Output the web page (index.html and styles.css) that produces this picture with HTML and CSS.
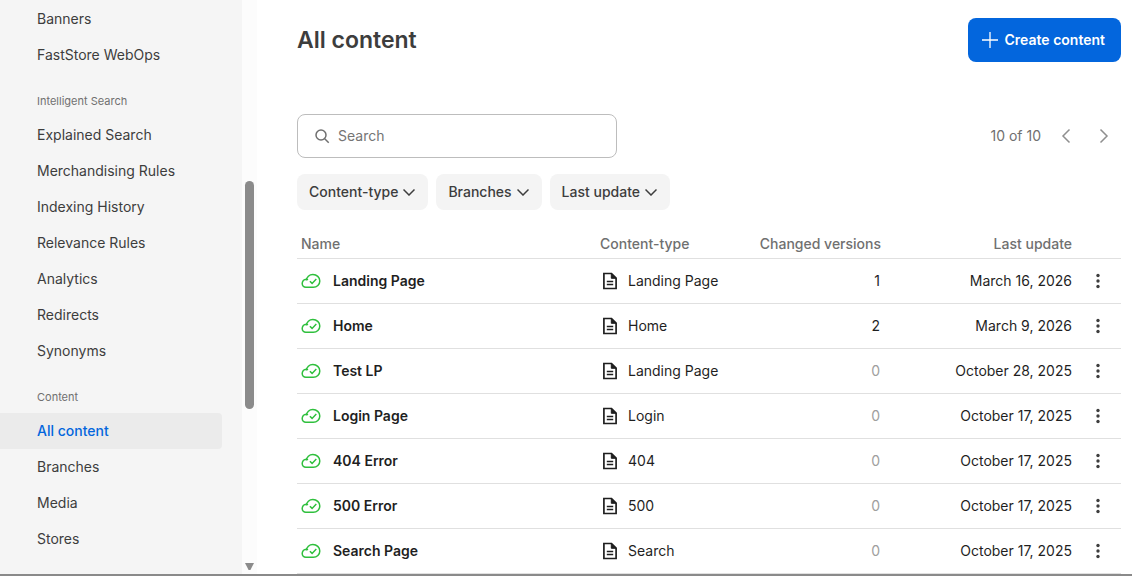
FILE: index.html
```html
<!DOCTYPE html>
<html lang="en">
<head>
  <meta charset="UTF-8" />
  <meta name="viewport" content="width=device-width, initial-scale=1.0" />
  <title>All content</title>
  <link rel="stylesheet" href="styles.css">
</head>
<body>

  <!-- Shared icons -->
  <svg class="sprite" aria-hidden="true">
    <symbol id="icon-cloud" viewBox="0 0 20 16">
      <path d="M5.500 7.500C5.500 4 8.300 1.500 11.900 1.500c3.800 0 6.900 2.800 6.900 6.400s-2.900 6.400-6.500 6.400H4.900C2.700 14.300 1.200 12.800 1.200 10.600s1.700-4.400 3.900-4.400c.8 0 1.400.2 2 .5" />
      <path d="M8.900 8.200l2.200 2.200 4.200-4.300" />
    </symbol>
    <symbol id="icon-doc" viewBox="0 0 16 18">
      <path d="M1.900 1.500h7.600l4.600 4.600v10.400H1.900z" />
      <path d="M9.300 1.700v4.600h4.600z" fill="currentColor" stroke-width="1" />
      <path d="M4.800 9.500h6.400M4.800 12.500h6.400" stroke-width="1.500" />
    </symbol>
    <symbol id="icon-dots" viewBox="0 0 16 16">
      <circle cx="8" cy="2.500" r="1.700" />
      <circle cx="8" cy="8" r="1.700" />
      <circle cx="8" cy="13.500" r="1.700" />
    </symbol>
    <symbol id="icon-down" viewBox="0 0 12 8">
      <path d="M.500 1.500L6 7l5.500-5.500" />
    </symbol>
  </svg>

  <div class="layout">
    <aside class="sidebar">
      <nav class="menu">
        <a href="#">Banners</a>
        <a href="#">FastStore WebOps</a>
        <h2>Intelligent Search</h2>
        <a href="#">Explained Search</a>
        <a href="#">Merchandising Rules</a>
        <a href="#">Indexing History</a>
        <a href="#">Relevance Rules</a>
        <a href="#">Analytics</a>
        <a href="#">Redirects</a>
        <a href="#">Synonyms</a>
        <h2>Content</h2>
        <a href="#" class="active">All content</a>
        <a href="#">Branches</a>
        <a href="#">Media</a>
        <a href="#">Stores</a>
      </nav>
      <div class="scrollbar">
        <div class="thumb"></div>
        <div class="arrow"></div>
      </div>
    </aside>

    <main class="content">
      <header class="page-header">
        <h1>All content</h1>
        <button type="button" class="create-btn">
          <svg width="16" height="16" viewBox="0 0 16 16"><path d="M8 0v16M0 8h16" /></svg>
          Create content
        </button>
      </header>

      <div class="toolbar">
        <label class="search">
          <svg width="16" height="16" viewBox="0 0 16 16"><circle cx="7" cy="7" r="5" /><path d="M10.700 10.700l4 4" /></svg>
          <input type="text" placeholder="Search" aria-label="Search" />
        </label>
        <div class="pagination">
          <span>10 of 10</span>
          <button type="button" aria-label="Previous page">
            <svg width="10" height="16" viewBox="0 0 10 16"><path d="M8.500 1.500L2 8l6.500 6.500" /></svg>
          </button>
          <button type="button" aria-label="Next page">
            <svg width="10" height="16" viewBox="0 0 10 16"><path d="M1.500 1.500L8 8l-6.500 6.500" /></svg>
          </button>
        </div>
      </div>

      <div class="filters">
        <button type="button">Content-type <svg><use href="#icon-down" /></svg></button>
        <button type="button">Branches <svg><use href="#icon-down" /></svg></button>
        <button type="button">Last update <svg><use href="#icon-down" /></svg></button>
      </div>

      <table>
        <thead>
          <tr>
            <th class="name">Name</th>
            <th class="type">Content-type</th>
            <th class="versions">Changed versions</th>
            <th class="date">Last update</th>
            <th class="actions"></th>
          </tr>
        </thead>
        <tbody>
          <tr>
            <td class="name"><div><svg class="cloud"><use href="#icon-cloud" /></svg>Landing Page</div></td>
            <td class="type"><div><svg class="doc"><use href="#icon-doc" /></svg>Landing Page</div></td>
            <td class="versions">1</td>
            <td class="date">March 16, 2026</td>
            <td class="actions"><button type="button" aria-label="Actions"><svg><use href="#icon-dots" /></svg></button></td>
          </tr>
          <tr>
            <td class="name"><div><svg class="cloud"><use href="#icon-cloud" /></svg>Home</div></td>
            <td class="type"><div><svg class="doc"><use href="#icon-doc" /></svg>Home</div></td>
            <td class="versions">2</td>
            <td class="date">March 9, 2026</td>
            <td class="actions"><button type="button" aria-label="Actions"><svg><use href="#icon-dots" /></svg></button></td>
          </tr>
          <tr>
            <td class="name"><div><svg class="cloud"><use href="#icon-cloud" /></svg>Test LP</div></td>
            <td class="type"><div><svg class="doc"><use href="#icon-doc" /></svg>Landing Page</div></td>
            <td class="versions none">0</td>
            <td class="date">October 28, 2025</td>
            <td class="actions"><button type="button" aria-label="Actions"><svg><use href="#icon-dots" /></svg></button></td>
          </tr>
          <tr>
            <td class="name"><div><svg class="cloud"><use href="#icon-cloud" /></svg>Login Page</div></td>
            <td class="type"><div><svg class="doc"><use href="#icon-doc" /></svg>Login</div></td>
            <td class="versions none">0</td>
            <td class="date">October 17, 2025</td>
            <td class="actions"><button type="button" aria-label="Actions"><svg><use href="#icon-dots" /></svg></button></td>
          </tr>
          <tr>
            <td class="name"><div><svg class="cloud"><use href="#icon-cloud" /></svg>404 Error</div></td>
            <td class="type"><div><svg class="doc"><use href="#icon-doc" /></svg>404</div></td>
            <td class="versions none">0</td>
            <td class="date">October 17, 2025</td>
            <td class="actions"><button type="button" aria-label="Actions"><svg><use href="#icon-dots" /></svg></button></td>
          </tr>
          <tr>
            <td class="name"><div><svg class="cloud"><use href="#icon-cloud" /></svg>500 Error</div></td>
            <td class="type"><div><svg class="doc"><use href="#icon-doc" /></svg>500</div></td>
            <td class="versions none">0</td>
            <td class="date">October 17, 2025</td>
            <td class="actions"><button type="button" aria-label="Actions"><svg><use href="#icon-dots" /></svg></button></td>
          </tr>
          <tr>
            <td class="name"><div><svg class="cloud"><use href="#icon-cloud" /></svg>Search Page</div></td>
            <td class="type"><div><svg class="doc"><use href="#icon-doc" /></svg>Search</div></td>
            <td class="versions none">0</td>
            <td class="date">October 17, 2025</td>
            <td class="actions"><button type="button" aria-label="Actions"><svg><use href="#icon-dots" /></svg></button></td>
          </tr>
        </tbody>
      </table>
    </main>
  </div>

</body>
</html>
```
FILE: styles.css
```css
* {
  margin: 0;
  padding: 0;
  box-sizing: border-box;
}

body {
  height: 100vh;
  overflow: hidden;
  display: flex;
  flex-direction: column;
  border-bottom: 2px solid #8a8a8a;
  background: #fff;
  color: #1f1f1f;
  font-family: Inter, "Liberation Sans", sans-serif;
  font-size: 14px;
  line-height: 20px;
}

button,
input {
  font: inherit;
  color: inherit;
  border: none;
  background: none;
}

button {
  cursor: pointer;
}

svg {
  fill: none;
  stroke: currentColor;
  flex-shrink: 0;
}

.sprite {
  display: none;
}

.layout {
  display: flex;
  flex: 1;
  min-height: 0;
}

/* Sidebar */
.sidebar {
  display: flex;
  flex-shrink: 0;
  background: #f5f5f5;
}

.menu {
  width: 242px;
  padding: 1px 20px 0 0;
  overflow: hidden;
}

.menu a {
  display: block;
  padding: 8px 0 8px 37px;
  border-radius: 0 4px 4px 0;
  color: #3d3d3d;
  text-decoration: none;
}

.menu a.active {
  background: #ebebeb;
  color: #0366dd;
  font-weight: 500;
}

.menu h2 {
  padding: 20px 0 8px 37px;
  font-size: 11px;
  font-weight: 400;
  line-height: 16px;
  color: #707070;
}

.scrollbar {
  display: flex;
  flex-direction: column;
  justify-content: space-between;
  align-items: center;
  width: 15px;
  padding: 181px 0 4px;
  background: #fcfcfc;
}

.thumb {
  width: 9px;
  height: 228px;
  border-radius: 5px;
  background: #8b8b8b;
}

.arrow {
  width: 9px;
  height: 7px;
  background: #8b8b8b;
  clip-path: polygon(0 0, 100% 0, 60% 100%, 40% 100%);
}

/* Main area */
.content {
  flex: 1;
  min-width: 0;
  padding: 18px 11px 0 40px;
  overflow: hidden;
}

.page-header {
  display: flex;
  justify-content: space-between;
  align-items: center;
  height: 44px;
  margin-bottom: 52px;
}

h1 {
  font-size: 23px;
  font-weight: 600;
  line-height: 32px;
  color: #3d3d3d;
}

.create-btn {
  display: flex;
  align-items: center;
  gap: 7px;
  height: 44px;
  padding: 0 16px 0 14px;
  border-radius: 8px;
  background: #0366dd;
  color: #fff;
  font-weight: 600;
}

.create-btn svg {
  stroke-width: 1.3;
}

.toolbar {
  display: flex;
  justify-content: space-between;
  align-items: center;
  margin-bottom: 16px;
  color: #707070;
}

.search {
  display: flex;
  align-items: center;
  gap: 8px;
  width: 320px;
  height: 44px;
  padding: 0 16px;
  border: 1px solid #bdbdbd;
  border-radius: 8px;
}

.search svg {
  stroke-width: 1.5;
}

.search input {
  flex: 1;
  min-width: 0;
  outline: none;
}

.search input::placeholder {
  color: #757575;
}

.pagination {
  display: flex;
  align-items: center;
  padding-right: 8px;
}

.pagination span {
  margin-right: 16px;
}

.pagination button {
  display: flex;
  padding: 0 4px;
  color: #8f8f8f;
}

.pagination button + button {
  margin-left: 20px;
}

.pagination svg {
  stroke-width: 1.5;
}

.filters {
  display: flex;
  gap: 8px;
  margin-bottom: 20px;
}

.filters button {
  display: flex;
  align-items: center;
  gap: 5px;
  height: 36px;
  padding: 0 13px 0 12px;
  border-radius: 8px;
  background: #f4f4f4;
  color: #3d3d3d;
  font-weight: 500;
}

.filters svg {
  width: 12px;
  height: 8px;
  stroke-width: 1.5;
}

/* Table */
table {
  width: 100%;
  table-layout: fixed;
  border-collapse: separate;
  border-spacing: 0;
}

th,
td {
  height: 45px;
  padding: 0 5px 0 4px;
  border-bottom: 1px solid #e0e0e0;
  text-align: left;
  white-space: nowrap;
}

th {
  height: 29px;
  font-weight: 500;
  color: #707070;
}

th.name {
  width: 299px;
}

th.type {
  width: 150px;
}

th.versions {
  width: 140px;
}

th.actions {
  width: 44px;
}

td.name {
  font-weight: 600;
}

td div {
  display: flex;
  align-items: center;
}

.versions,
.date {
  text-align: right;
}

td.versions {
  padding-right: 6px;
}

.versions.none {
  color: #9e9e9e;
}

.cloud {
  width: 20px;
  height: 16px;
  margin-right: 12px;
  color: #2fbf3d;
  stroke-width: 1.5;
}

.doc {
  width: 16px;
  height: 18px;
  margin: 0 10px 0 2px;
  stroke-width: 1.700;
}

td.actions button {
  display: flex;
  margin-left: 9px;
}

td.actions svg {
  width: 16px;
  height: 16px;
  fill: #3d3d3d;
  stroke: none;
}
```
